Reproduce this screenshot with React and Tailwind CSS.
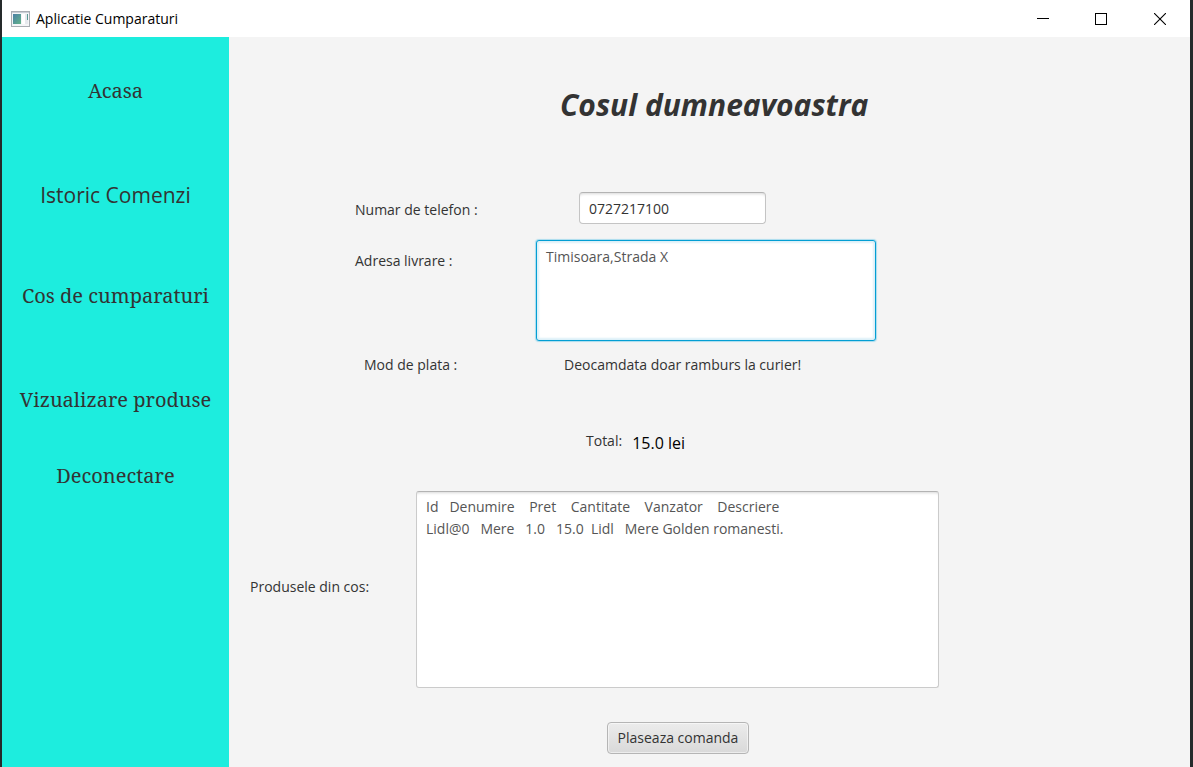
const basket =
  "Id   Denumire    Pret    Cantitate    Vanzator    Descriere\nLidl@0   Mere   1.0   15.0  Lidl   Mere Golden romanesti.";

function AppIcon() {
  return (
    <svg width="19" height="16" viewBox="0 0 19 16" aria-hidden="true">
      <defs>
        <linearGradient id="pane" x1="0" y1="0" x2="1" y2="1">
          <stop offset="0" stopColor="#4a7fa5" />
          <stop offset="1" stopColor="#63b48a" />
        </linearGradient>
      </defs>
      <rect x="0.5" y="0.5" width="18" height="15" fill="#f4f5f7" stroke="#a9adb3" />
      <path d="M1 1.5h17" stroke="#c9ced6" />
      <rect x="2" y="3" width="8" height="10" fill="url(#pane)" />
      <rect x="11" y="3" width="3" height="10" fill="#fff" />
      <rect x="14" y="3" width="3" height="10" fill="#e6e9ee" />
      <path d="M16.5 3v6" stroke="#5b9a94" />
    </svg>
  );
}

function TitleBar() {
  return (
    <header className="flex h-[37px] items-center justify-between bg-white">
      <div className="flex items-center gap-[6px] pl-[9px]">
        <AppIcon />
        <span className="text-[14px] leading-5 text-black">Aplicatie Cumparaturi</span>
      </div>
      <div className="flex h-full">
        <button type="button" aria-label="Minimizeaza" className="flex w-[58px] items-center justify-center">
          <svg width="12" height="12" viewBox="0 0 12 12" shapeRendering="crispEdges"><path d="M0 5.5h12" stroke="#000" /></svg>
        </button>
        <button type="button" aria-label="Maximizeaza" className="flex w-[58px] items-center justify-center">
          <svg width="12" height="12" viewBox="0 0 12 12" shapeRendering="crispEdges"><rect x="0.5" y="0.5" width="11" height="11" fill="none" stroke="#000" /></svg>
        </button>
        <button type="button" aria-label="Inchide" className="flex w-[60px] items-center justify-center">
          <svg width="12" height="12" viewBox="0 0 12 12"><path d="M0 0l12 12M12 0L0 12" stroke="#000" strokeWidth="1.1" /></svg>
        </button>
      </div>
    </header>
  );
}

function Sidebar() {
  const serif = "font-['Noto_Serif','Liberation_Serif',serif] text-[20px] leading-8";
  return (
    <nav className="flex w-[227px] shrink-0 flex-col items-center bg-[#1dedde] pt-[38px] text-[#333]">
      <a href="#acasa" className={serif}>Acasa</a>
      <a href="#istoric" className="mt-[72px] text-[21px] leading-8">Istoric Comenzi</a>
      <a href="#cos" className={`${serif} mt-[69px]`}>Cos de cumparaturi</a>
      <a href="#produse" className={`${serif} mt-[72px]`}>Vizualizare produse</a>
      <a href="#deconectare" className={`${serif} mt-[44px]`}>Deconectare</a>
    </nav>
  );
}

export default function App() {
  return (
    <div className="flex min-h-screen flex-col border-l-2 border-r-3 border-[#252a2b] bg-[#f4f4f4] font-['Open_Sans','Noto_Sans',sans-serif] text-[14px] leading-5 text-[#333]">
      <TitleBar />
      <div className="flex flex-1">
        <Sidebar />
        <main className="min-w-0 flex-1 pt-12 pb-3">
          <h1 className="pl-[331px] text-[30px] leading-10 font-bold italic">Cosul dumneavoastra</h1>

          <form onSubmit={(e) => e.preventDefault()}>
            <div className="mt-[67px] flex items-center pl-[126px]">
              <label htmlFor="phone" className="w-[224px] shrink-0 pt-1">Numar de telefon :</label>
              <input
                id="phone"
                type="tel"
                defaultValue="0727217100"
                className="h-8 w-[187px] rounded-[4px] border border-[#c4c4c4] border-t-[#b3b3b3] bg-white px-[9px] shadow-[inset_0_3px_3px_-2px_#d8d8d8] outline-none"
              />
            </div>

            <div className="mt-4 flex items-start pl-[126px]">
              <label htmlFor="address" className="w-[181px] shrink-0 pt-[11px]">Adresa livrare :</label>
              <textarea
                id="address"
                defaultValue="Timisoara,Strada X"
                className="h-[101px] w-[340px] resize-none rounded-[3px] border border-[#039ed3] bg-white px-[9px] py-[6px] text-[#555] shadow-[0_0_1px_1px_#a9dcee,inset_0_0_2px_2px_#dcf0f8] outline-none"
              />
            </div>

            <div className="mt-[14px] flex pl-[135px]">
              <span className="w-[200px] shrink-0">Mod de plata :</span>
              <span>Deocamdata doar ramburs la curier!</span>
            </div>

            <div className="mt-14 flex items-end gap-[10px] pl-[357px]">
              <span className="pb-1">Total:</span>
              <output className="text-[16px] leading-6 text-black">15.0 lei</output>
            </div>

            <div className="mt-9 flex items-center pl-[21px]">
              <label htmlFor="basket" className="w-[166px] shrink-0 pb-[6px]">Produsele din cos:</label>
              <textarea
                id="basket"
                readOnly
                defaultValue={basket}
                className="h-[197px] w-[523px] resize-none rounded-[3px] border border-[#cbcbcb] border-t-[#b3b3b3] bg-white px-[9px] py-1 leading-[22px] text-[#555] shadow-[inset_0_3px_3px_-2px_#d8d8d8] outline-none"
              />
            </div>

            <div className="mt-[34px] pl-[378px]">
              <button
                type="submit"
                className="h-8 w-[142px] rounded-[4px] border border-[#b5b5b5] bg-linear-to-b from-[#ececec] to-[#d9d9d9] whitespace-nowrap shadow-[inset_0_0_0_1px_#ffffff80]"
              >
                Plaseaza comanda
              </button>
            </div>
          </form>
        </main>
      </div>
    </div>
  );
}
